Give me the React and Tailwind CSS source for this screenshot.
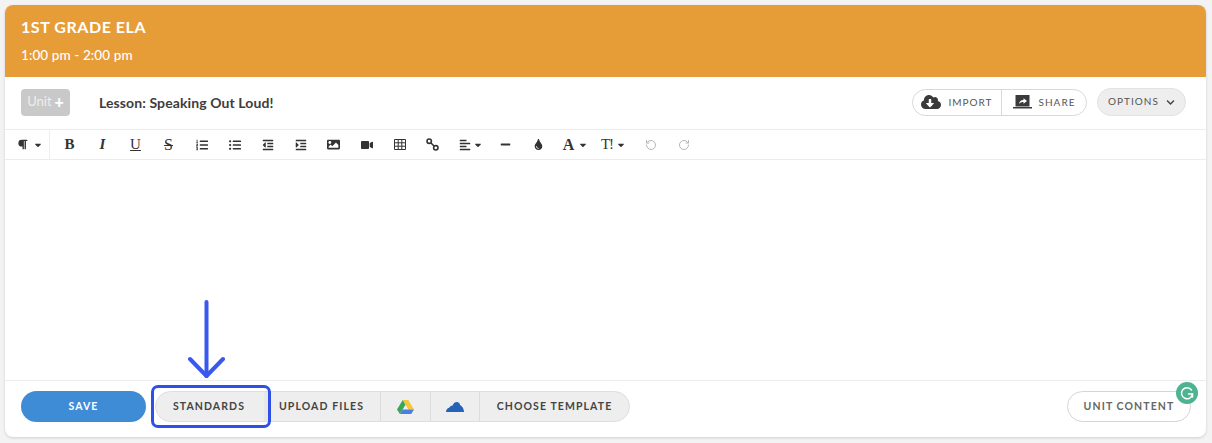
import React from 'react'
import {
  FaParagraph, FaListOl, FaListUl, FaOutdent, FaIndent, FaImage, FaVideo,
  FaAlignLeft, FaMinus, FaTint, FaCloudDownloadAlt, FaChevronDown, FaCaretDown,
} from 'react-icons/fa'
import { RotateCcw, RotateCw } from 'lucide-react'

const ink = 'text-[#333]'

function Btn({ w = 'w-[33px]', className = '', children }) {
  return <div className={`${w} h-full flex items-center justify-center ${ink} ${className}`}>{children}</div>
}

function Glyph({ className = '', children }) {
  return <span className={`font-['Liberation_Serif',serif] text-[15px] leading-none ${className}`}>{children}</span>
}

function LinkIcon() {
  return (
    <svg width="13" height="13" viewBox="0 0 13 13" fill="none" stroke="#333" strokeWidth="1.6">
      <circle cx="3.2" cy="3.2" r="2.2" />
      <circle cx="9.800" cy="9.800" r="2.2" />
      <path d="M5 5l3 3" />
    </svg>
  )
}

function TableIcon() {
  return (
    <svg width="12" height="11" viewBox="0 0 12 11" fill="none" stroke="#333" strokeWidth="1">
      <path d="M.5.500h11v10H.500z" />
      <path d="M.5 3.800h11M.5 7.200h11M4.200.5v10M7.800.5v10" />
    </svg>
  )
}

function Toolbar() {
  return (
    <div className="h-[30px] flex items-center border-b border-[#ececec]">
      <div className="w-[45px] h-full flex items-center justify-end pr-[6px] gap-[5px] border-r border-[#eee]">
        <FaParagraph size={11} color="#333" />
        <FaCaretDown size={10} color="#333" />
      </div>
      <div className="w-[3px]" />
      <Btn><Glyph className="font-bold">B</Glyph></Btn>
      <Btn><Glyph className="italic font-bold">I</Glyph></Btn>
      <Btn><Glyph className="underline">U</Glyph></Btn>
      <Btn><Glyph className="line-through text-[16px]">S</Glyph></Btn>
      <Btn><FaListOl size={12} /></Btn>
      <Btn><FaListUl size={12} /></Btn>
      <Btn><FaOutdent size={12} /></Btn>
      <Btn><FaIndent size={12} /></Btn>
      <Btn><FaImage size={13} /></Btn>
      <Btn><FaVideo size={12} /></Btn>
      <Btn><TableIcon /></Btn>
      <Btn><LinkIcon /></Btn>
      <Btn w="w-[40px]" className="pl-[3px]">
        <FaAlignLeft size={12} />
        <FaCaretDown size={10} className="ml-[2px]" />
      </Btn>
      <Btn><FaMinus size={11} /></Btn>
      <Btn><FaTint size={11} /></Btn>
      <Btn w="w-[38px]" className="pl-[3px]">
        <Glyph className="text-[16px] font-bold">A</Glyph>
        <FaCaretDown size={10} className="ml-[4px]" />
      </Btn>
      <Btn w="w-[41px]">
        <Glyph className="text-[15px] tracking-[-1px]">T!</Glyph>
        <FaCaretDown size={10} className="ml-[3px]" />
      </Btn>
      <Btn><RotateCcw size={12} color="#b5b5b5" strokeWidth={2} /></Btn>
      <Btn><RotateCw size={12} color="#b5b5b5" strokeWidth={2} /></Btn>
    </div>
  )
}

function ShareIcon() {
  return (
    <svg width="19" height="14" viewBox="0 0 19 14">
      <path d="M2.500 0h14v11.500h-14z" fill="#3a3a3a" />
      <path d="M0 12h19v1.500H0z" fill="#3a3a3a" />
      <path d="M6 9c.4-2.400 2-3.800 4.500-3.900V3.200L14 6l-3.500 2.800V7C8.600 7 7.200 7.600 6 9z" fill="#fff" />
    </svg>
  )
}

function DriveIcon() {
  return (
    <svg width="17" height="14" viewBox="0 0 17 14">
      <path d="M5.700 0h5.600l5.700 9.500h-5.600z" fill="#f4c63d" />
      <path d="M5.700 0l2.800 4.800L2.900 14 0 9.500z" fill="#3aa757" />
      <path d="M5.500 9.500H17L14.200 14H2.900z" fill="#4a7fe0" />
    </svg>
  )
}

function OneDriveIcon() {
  return (
    <svg width="18" height="11" viewBox="0 0 18 11">
      <path d="M0 11C0 8.800 1.300 7 3.200 6.700 4.200 4.800 5.600 4.600 6.400 4.800 7.300 2.300 8.800 1 10.800 1c1.900 0 3.200 1.300 3.400 3.300C16.200 5 18 8 18 11z" fill="#2563b8" />
    </svg>
  )
}

function Segment({ w, last, className = '', children }) {
  return (
    <div className={`${w} h-full flex items-center justify-center ${last ? '' : 'border-r border-[#dcdcdc]'} ${className}`}>
      {children}
    </div>
  )
}

function Footer() {
  return (
    <div className="h-[56px] flex items-start justify-between pt-[10px] pl-[16px] pr-[15px] text-[10.5px] font-bold tracking-[1.1px] text-[#444]">
      <div className="flex gap-[9px]">
        <button className="w-[125px] h-[31px] rounded-full bg-[#3f8cd6] text-white">SAVE</button>
        <div className="flex h-[31px] w-[475px] rounded-full bg-[#eeeeee] border border-[#dedede] overflow-hidden">
          <Segment w="w-[113px]" className="pr-[6px] shadow-[inset_-4px_0_0_#e8e8e8]">STANDARDS</Segment>
          <Segment w="w-[112px]" className="pr-[6px]">UPLOAD FILES</Segment>
          <Segment w="w-[50px]"><DriveIcon /></Segment>
          <Segment w="w-[49px]"><OneDriveIcon /></Segment>
          <Segment w="flex-1" last>CHOOSE TEMPLATE</Segment>
        </div>
      </div>
      <button className="relative w-[124px] h-[31px] rounded-full border border-[#d5d5d5] text-[#666]">
        UNIT CONTENT
      </button>
    </div>
  )
}

// blue annotation drawn on top of the screenshot
function Annotation() {
  return (
    <>
      <svg className="absolute left-[188px] top-[300px]" width="38" height="80" viewBox="0 0 38 80" fill="none" stroke="#3858f0" strokeWidth="4" strokeLinecap="round" strokeLinejoin="round">
        <path d="M18.500 2v74" />
        <path d="M2 59l16.500 17L35 59" />
      </svg>
      <div className="absolute left-[151px] top-[385px] w-[120px] h-[43px] rounded-[7px] border-[3.5px] border-[#2f50e8]" />
      <div className="absolute left-[1176px] top-[382px] w-[22px] h-[22px] rounded-full bg-[#4db391] flex items-center justify-center">
        <svg width="14" height="14" viewBox="0 0 14 14" fill="none" stroke="#fff" strokeWidth="1.500" strokeLinecap="round">
          <path d="M11.500 4A5.500 5.500 0 1 0 12.500 8H8.500" />
          <path d="M12.500 8v3" />
        </svg>
      </div>
    </>
  )
}

export default function App() {
  return (
    <div className="relative w-[1212px] h-[443px] bg-[#f3f3f3] pt-[5px] pl-[5px] pr-[6px] font-['Lato','Open_Sans',sans-serif]">
      <div className="h-[432px] bg-white rounded-[8px] shadow-[0_1px_3px_rgba(0,0,0,0.15)] flex flex-col overflow-hidden">
        <div className="h-[72px] bg-[#e69c37] text-white px-[16px] pt-[13px]">
          <div className="text-[16px] font-bold leading-[18px] tracking-[0.55px]">1ST GRADE ELA</div>
          <div className="text-[13.5px] font-medium leading-[16px] tracking-[0.1px] mt-[11px]">1:00 pm - 2:00 pm</div>
        </div>

        <div className="h-[53px] flex items-center justify-between pl-[16px] pr-[20px] pb-[2px] border-b border-[#ececec]">
          <div className="flex items-center">
            <div className="w-[49px] h-[27px] rounded-[4px] bg-[#c9c9c9] text-[#eeeeee] text-[13px] flex items-center justify-center gap-[3px]">
              Unit <span className="font-black text-[16px] leading-none text-white">+</span>
            </div>
            <div className="ml-[29px] text-[14px] font-bold tracking-[0.1px] text-[#3d3d3d]">Lesson: Speaking Out Loud!</div>
          </div>
          <div className="flex items-center gap-[10px] text-[10px] tracking-[1px] text-[#555]">
            <div className="flex w-[175px] h-[27px] rounded-full border border-[#d8d8d8]">
              <div className="w-[89px] flex items-center justify-center gap-[7px] border-r border-[#d8d8d8]">
                <FaCloudDownloadAlt size={20} color="#3a3a3a" />
                IMPORT
              </div>
              <div className="flex-1 flex items-center justify-center gap-[7px]">
                <ShareIcon />
                SHARE
              </div>
            </div>
            <div className="w-[89px] h-[28px] rounded-full bg-[#eeeeee] border border-[#e2e2e2] flex items-center justify-center gap-[7px] pb-[1px]">
              OPTIONS
              <FaChevronDown size={9} color="#444" className="mt-[2px]" />
            </div>
          </div>
        </div>

        <Toolbar />

        <div className="flex-1 border-b border-[#ececec]" />

        <Footer />
      </div>
      <Annotation />
    </div>
  )
}
